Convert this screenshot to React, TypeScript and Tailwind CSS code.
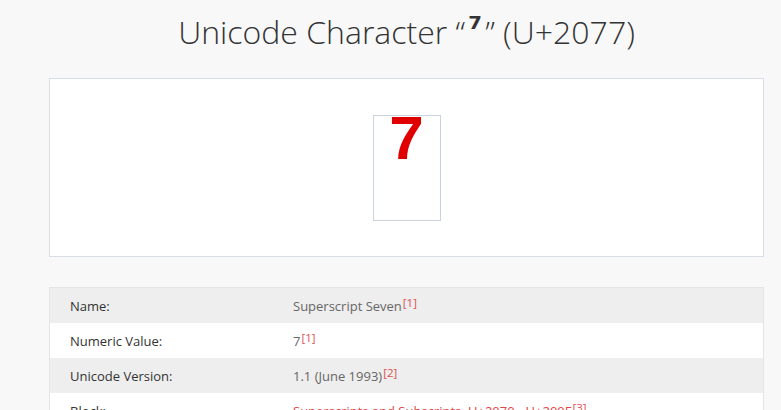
import React from "react";

const Ref = ({ n }: { n: number }) => (
  <sup className="relative -top-[4px] ml-[1px] text-[11.5px] text-[#e05050]">[{n}]</sup>
);

export default function App() {
  const rows: { label: string; value: React.ReactNode; gray: boolean }[] = [
    { label: "Name:", value: <>Superscript Seven<Ref n={1} /></>, gray: true },
    { label: "Numeric Value:", value: <>7<Ref n={1} /></>, gray: false },
    { label: "Unicode Version:", value: <>1.1 (June 1993)<Ref n={2} /></>, gray: true },
    {
      label: "Block:",
      value: (
        <>
          <span className="text-[#e04848]">Superscripts and Subscripts, U+2070 - U+209F</span>
          <Ref n={3} />
        </>
      ),
      gray: false,
    },
  ];
  return (
    <div
      className="min-h-[410px] w-[781px] overflow-hidden bg-[#f8f8f9]"
      style={{ fontFamily: '"Open Sans", "Liberation Sans", sans-serif' }}
    >
      <div className="ml-[49px] w-[715px]">
        <h1 className="h-[78px] pt-[8px] text-center text-[32px] font-light leading-[48px] text-[#333]">
          Unicode Character “
          <span
            className="relative -top-[4px] mx-[3px] font-bold"
            style={{ fontFamily: '"DejaVu Sans", sans-serif' }}
          >
            ⁷
          </span>
          ” (U+2077)
        </h1>
        <div className="flex h-[179px] justify-center border border-[#d9dde6] bg-white pt-[36px]">
          <div className="h-[106px] w-[68px] border border-[#c9d3e0] text-center">
            <span
              className="block text-[62px] font-bold leading-[44px] text-[#e00000]"
              style={{ fontFamily: '"Liberation Sans", Arial, sans-serif' }}
            >
              7
            </span>
          </div>
        </div>
        <div className="mt-[30px] border-t border-l border-r border-[#e4e4e4] bg-white text-[13px] leading-[20px]">
          {rows.map((r) => (
            <div
              key={r.label}
              className={`flex h-[35px] items-center ${r.gray ? "bg-[#eeeeee]" : "bg-white"}`}
            >
              <div className="w-[243px] shrink-0 pl-[20px] text-[#333]">{r.label}</div>
              <div className="whitespace-nowrap text-[#666]">{r.value}</div>
            </div>
          ))}
        </div>
      </div>
    </div>
  );
}
